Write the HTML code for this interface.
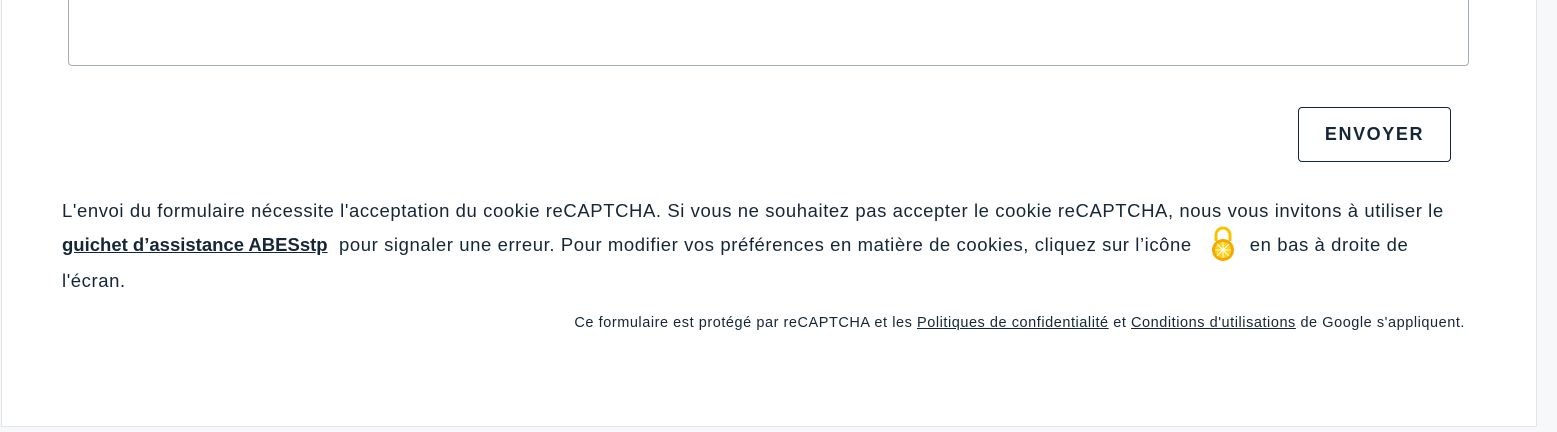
<!DOCTYPE html>
<html><head><meta charset="utf-8"><style>
html,body{margin:0;padding:0;width:1557px;height:432px;background:#f7f8fa;overflow:hidden;font-family:"Liberation Sans",sans-serif;color:#142638}
.card{position:absolute;left:1px;top:-2px;width:1534px;height:427px;background:#fff;border:1px solid #e3e5e8}
.ta{position:absolute;left:66px;top:-10px;width:1399px;height:75px;border:1px solid #a3acb5;border-radius:4px}
.btn{position:absolute;left:1296px;top:108px;width:151px;height:53px;border:1px solid #142638;border-radius:4px;font-weight:bold;font-size:18px;letter-spacing:1.6px;text-align:center;line-height:53px}
.p{position:absolute;left:60px;top:196px;width:1395px;font-size:18.5px;line-height:32px;letter-spacing:0.58px}
.p a{color:#142638;text-decoration:underline;font-weight:bold;letter-spacing:0px}
.s{position:absolute;right:71px;top:316px;font-size:14.5px;letter-spacing:0.55px;white-space:nowrap}
.s a{color:#142638;text-decoration:underline}
.lock{display:inline-block;vertical-align:middle;margin:0 14px 0 18px;width:26px;height:38px;position:relative;top:-2px}
</style></head><body>
<div class="card">
<div class="ta"></div>
<div class="btn">ENVOYER</div>
<div class="p">L'envoi du formulaire nécessite l'acceptation du cookie reCAPTCHA. Si vous ne souhaitez pas accepter le cookie reCAPTCHA, nous vous invitons à utiliser le <a>guichet d’assistance ABESstp</a>&nbsp; pour signaler une erreur. Pour modifier vos préférences en matière de cookies, cliquez sur l’icône<svg class="lock" viewBox="0 0 26 38"><path d="M6 16 V10 a7 7 0 0 1 14 0 V16" fill="none" stroke="#f5c400" stroke-width="3"/><circle cx="13" cy="25" r="11" fill="#f7a800"/><circle cx="13" cy="25" r="8" fill="#ffd21a"/><g stroke="#fff" stroke-width="1"><line x1="13" y1="17" x2="13" y2="33"/><line x1="5" y1="25" x2="21" y2="25"/><line x1="7" y1="19" x2="19" y2="31"/><line x1="19" y1="19" x2="7" y2="31"/></g></svg>en bas à droite de l'écran.</div>
<div class="s">Ce formulaire est protégé par reCAPTCHA et les <a>Politiques de confidentialité</a> et <a>Conditions d'utilisations</a> de Google s'appliquent.</div>
</div>
</body></html>
